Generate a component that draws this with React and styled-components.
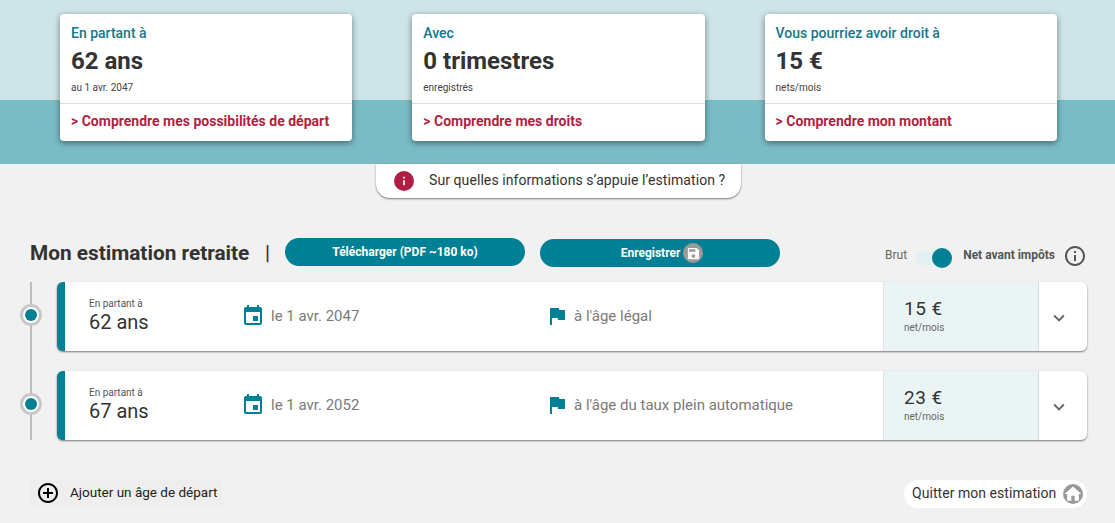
import React from 'react';
import styled, { createGlobalStyle } from 'styled-components';

const GlobalStyle = createGlobalStyle`
  * {
    box-sizing: border-box;
  }
  body {
    margin: 0;
    background: #f1f1f1;
    font-family: Roboto, "Liberation Sans", sans-serif;
  }
`;

const Page = styled.div`
  width: 1115px;
  height: 523px;
  overflow: hidden;
`;

const Banner = styled.section`
  height: 164px;
  padding: 14px 0 0 60px;
  display: grid;
  grid-template-columns: repeat(3, 292.3px);
  gap: 60px;
  align-items: start;
  background: linear-gradient(#cde4e8 0 100px, #7abcc6 100px);
`;

const Card = styled.article`
  height: 127px;
  display: flex;
  flex-direction: column;
  background: #fff;
  border-radius: 4px;
  box-shadow: 0 2px 6px rgba(0, 0, 0, 0.45);
`;

const CardBody = styled.div`
  height: 90px;
  padding: 11px 11px 0;
  border-bottom: 1px solid #ddd;
`;

const CardLabel = styled.div`
  font-size: 14px;
  line-height: 16px;
  font-weight: 500;
  color: #13788c;
`;

const CardValue = styled.div`
  margin-top: 5px;
  font-size: 24px;
  line-height: 30px;
  font-weight: 700;
  color: #333;
`;

const CardNote = styled.div`
  margin-top: 6px;
  font-size: 10px;
  line-height: 11px;
  color: #444;
`;

const CardLink = styled.a`
  padding: 9px 11px 0;
  font-size: 14px;
  line-height: 16px;
  font-weight: 700;
  color: #b01f43;
`;

const InfoPill = styled.div`
  width: 365px;
  height: 34px;
  margin: 0 0 0 376px;
  display: flex;
  align-items: center;
  gap: 15px;
  padding: 0 0 0 18px;
  background: #fff;
  border-radius: 0 0 14px 14px;
  box-shadow: 0 1px 2px rgba(0, 0, 0, 0.5);
  font-size: 14px;
  letter-spacing: 0.08px;
  color: #333;
`;

// the text sits a pixel above the centre of its icon
const RaisedText = styled.span`
  margin-top: -2px;
`;

const Heading = styled.div`
  height: 84px;
  padding: 40px 28px 0 30px;
  display: flex;
  align-items: flex-start;
`;

const Title = styled.h1`
  margin: 0;
  width: 235px;
  font-size: 20.8px;
  line-height: 30px;
  font-weight: 700;
  color: #333;
`;

const Separator = styled.span`
  width: 20px;
  font-size: 20px;
  line-height: 30px;
  font-weight: 500;
  color: #333;
`;

const PillButton = styled.button`
  width: 240px;
  height: 28px;
  margin: ${(p) => (p.$lower ? '1px 0 0 15px' : '0')};
  display: flex;
  align-items: center;
  justify-content: center;
  gap: 3px;
  padding: ${(p) => (p.$lower ? '0 0 0 4px' : '0')};
  border: 0;
  border-radius: 14px;
  background: #008094;
  color: #fff;
  font-family: inherit;
  font-size: 12px;
  font-weight: 700;
`;

const RoundIcon = styled.span`
  width: ${(p) => p.$size}px;
  height: ${(p) => p.$size}px;
  flex: none;
  display: flex;
  align-items: center;
  justify-content: center;
  border-radius: 50%;
  background: ${(p) => p.$bg};
`;

const Toggle = styled.div`
  margin-left: auto;
  margin-top: 6px;
  display: flex;
  align-items: center;
  font-size: 12px;
  color: #666;
`;

const ToggleLabel = styled.span`
  margin: -2px ${(p) => (p.$active ? '8px' : '0')} 0 0;
  font-weight: ${(p) => (p.$active ? 700 : 400)};
  color: ${(p) => (p.$active ? '#555' : '#666')};
`;

const Switch = styled.span`
  position: relative;
  width: 28px;
  height: 14px;
  margin: 4px 19px 0 9px;
  border-radius: 7px;
  background: #e3f0f2;
`;

const Knob = styled.span`
  position: absolute;
  top: -3px;
  right: -8px;
  width: 20px;
  height: 20px;
  border-radius: 50%;
  background: #008094;
`;

const Rows = styled.div`
  display: flex;
  flex-direction: column;
`;

const Row = styled.div`
  display: flex;
  height: ${(p) => (p.$last ? '69px' : '89px')};
  padding-left: 21px;
`;

const Track = styled.div`
  position: relative;
  width: 36px;
  flex: none;
`;

const TrackLine = styled.span`
  position: absolute;
  top: 0;
  bottom: 0;
  left: 9px;
  width: 2px;
  background: #bdbdbd;
`;

const Dot = styled.span`
  position: absolute;
  top: 22px;
  left: -1px;
  width: 22px;
  height: 22px;
  border: 3px solid #c8c8c8;
  border-radius: 50%;
  background: #fff;
  display: flex;
  align-items: center;
  justify-content: center;

  &::after {
    content: '';
    width: 12px;
    height: 12px;
    border-radius: 50%;
    background: #008094;
  }
`;

const EstimateCard = styled.article`
  width: 1030px;
  height: 69px;
  display: grid;
  grid-template-columns: 179px 305px 334px 156px 48px;
  background: #fff;
  border-left: 8px solid #008094;
  border-radius: 6px;
  box-shadow: 0 1px 2px rgba(0, 0, 0, 0.5);
  overflow: hidden;
`;

const AgeCell = styled.div`
  padding: 16px 0 0 24px;
`;

const AgeLabel = styled.div`
  font-size: 10px;
  line-height: 11px;
  color: #555;
`;

const AgeValue = styled.div`
  margin-top: 2px;
  font-size: 20px;
  line-height: 23px;
  color: #333;
`;

const MetaCell = styled.div`
  display: flex;
  align-items: center;
  gap: ${(p) => p.$gap}px;
  margin-left: ${(p) => p.$shift}px;
  padding-bottom: 1px;
  font-size: 15px;
  color: #7a7a7a;
`;

const AmountCell = styled.div`
  padding: 16px 0 0 20px;
  background: #eaf4f5;
  border-left: 1px solid #dde3e4;
  border-right: 1px solid #d5dcdd;
`;

const Amount = styled.div`
  font-size: 19px;
  line-height: 21px;
  letter-spacing: 0.5px;
  color: #333;
`;

const AmountNote = styled.div`
  margin-top: 3px;
  font-size: 10px;
  line-height: 11px;
  color: #666;
`;

const ChevronCell = styled.div`
  display: flex;
  align-items: center;
  justify-content: center;
  padding: 3px 8px 0 0;
`;

const Footer = styled.footer`
  margin-top: 40px;
  padding: 0 28px 0 30px;
  display: flex;
  justify-content: space-between;
  align-items: flex-start;
`;

const AddButton = styled.button`
  width: 192px;
  height: 26px;
  display: flex;
  align-items: center;
  gap: 10px;
  padding: 0 0 0 6px;
  border: 0;
  background: #eee;
  font-family: inherit;
  font-size: 13.5px;
  color: #222;
`;

const QuitButton = styled.button`
  width: 183px;
  height: 28px;
  display: flex;
  align-items: center;
  gap: 7px;
  padding: 0 0 0 8px;
  border: 0;
  border-radius: 14px;
  background: #fff;
  font-family: inherit;
  font-size: 14px;
  letter-spacing: 0.05px;
  color: #333;
`;

const MdIcon = ({ d, size = 24, color = '#008094' }) => (
  <svg width={size} height={size} viewBox="0 0 24 24" fill={color}>
    <path d={d} />
  </svg>
);

const CALENDAR =
  'M17 12h-5v5h5v-5zM16 1v2H8V1H6v2H5c-1.11 0-1.99.9-1.99 2L3 19c0 1.1.89 2 2 2h14c1.1 0 2-.9 2-2V5c0-1.1-.9-2-2-2h-1V1h-2zm3 18H5V8h14v11z';
const FLAG = 'M14.4 6L14 4H5v17h2v-7h5.6l.4 2h7V6z';
const SAVE =
  'M17 3H5c-1.11 0-2 .9-2 2v14c0 1.1.89 2 2 2h14c1.1 0 2-.9 2-2V7l-4-4zm-5 16c-1.66 0-3-1.34-3-3s1.34-3 3-3 3 1.34 3 3-1.34 3-3 3zm3-10H5V5h10v4z';
const HOME = 'M10 20v-6h4v6h5v-8h3L12 3 2 12h3v8z';
const INFO_SOLID = 'M11 17h2v-6h-2v6zm0-8h2V7h-2v2z';
const INFO_OUTLINE =
  'M11 7h2v2h-2zm0 4h2v6h-2zm1-9C6.48 2 2 6.48 2 12s4.48 10 10 10 10-4.48 10-10S17.52 2 12 2zm0 18c-4.41 0-8-3.59-8-8s3.59-8 8-8 8 3.59 8 8-3.59 8-8 8z';
const CHEVRON = 'M7.41 8.59L12 13.17l4.59-4.58L18 10l-6 6-6-6z';
const ADD_CIRCLE =
  'M13 7h-2v4H7v2h4v4h2v-4h4v-2h-4V7zm-1-5C6.48 2 2 6.48 2 12s4.48 10 10 10 10-4.48 10-10S17.52 2 12 2zm0 18c-4.41 0-8-3.59-8-8s3.59-8 8-8 8 3.59 8 8-3.59 8-8 8z';

const cards = [
  { label: 'En partant à', value: '62 ans', note: 'au 1 avr. 2047', link: '> Comprendre mes possibilités de départ' },
  { label: 'Avec', value: '0 trimestres', note: 'enregistrés', link: '> Comprendre mes droits' },
  { label: 'Vous pourriez avoir droit à', value: '15 €', note: 'nets/mois', link: '> Comprendre mon montant' },
];

const estimates = [
  { age: '62 ans', date: 'le 1 avr. 2047', reason: "à l'âge légal", amount: '15 €' },
  { age: '67 ans', date: 'le 1 avr. 2052', reason: "à l'âge du taux plein automatique", amount: '23 €' },
];

export default function App() {
  return (
    <Page>
      <GlobalStyle />
      <Banner>
        {cards.map((c) => (
          <Card key={c.label}>
            <CardBody>
              <CardLabel>{c.label}</CardLabel>
              <CardValue>{c.value}</CardValue>
              <CardNote>{c.note}</CardNote>
            </CardBody>
            <CardLink>{c.link}</CardLink>
          </Card>
        ))}
      </Banner>

      <InfoPill>
        <RoundIcon $size={20} $bg="#b01f43">
          <MdIcon d={INFO_SOLID} size={20} color="#fff" />
        </RoundIcon>
        <RaisedText>Sur quelles informations s’appuie l’estimation ?</RaisedText>
      </InfoPill>

      <Heading>
        <Title>Mon estimation retraite</Title>
        <Separator>|</Separator>
        <PillButton>Télécharger (PDF ~180 ko)</PillButton>
        <PillButton $lower>
          Enregistrer
          <RoundIcon $size={20} $bg="#9a9a9a">
            <MdIcon d={SAVE} size={15} color="#fff" />
          </RoundIcon>
        </PillButton>
        <Toggle>
          <ToggleLabel>Brut</ToggleLabel>
          <Switch>
            <Knob />
          </Switch>
          <ToggleLabel $active>Net avant impôts</ToggleLabel>
          <MdIcon d={INFO_OUTLINE} size={24} color="#555" />
        </Toggle>
      </Heading>

      <Rows>
        {estimates.map((e, i) => (
          <Row key={e.age} $last={i === estimates.length - 1}>
            <Track>
              <TrackLine />
              <Dot />
            </Track>
            <EstimateCard>
              <AgeCell>
                <AgeLabel>En partant à</AgeLabel>
                <AgeValue>{e.age}</AgeValue>
              </AgeCell>
              <MetaCell $gap={6} $shift={-3}>
                <MdIcon d={CALENDAR} />
                {e.date}
              </MetaCell>
              <MetaCell $gap={5} $shift={-4}>
                <MdIcon d={FLAG} />
                {e.reason}
              </MetaCell>
              <AmountCell>
                <Amount>{e.amount}</Amount>
                <AmountNote>net/mois</AmountNote>
              </AmountCell>
              <ChevronCell>
                <MdIcon d={CHEVRON} size={22} color="#666" />
              </ChevronCell>
            </EstimateCard>
          </Row>
        ))}
      </Rows>

      <Footer>
        <AddButton>
          <MdIcon d={ADD_CIRCLE} color="#000" />
          <RaisedText>Ajouter un âge de départ</RaisedText>
        </AddButton>
        <QuitButton>
          <RaisedText>Quitter mon estimation</RaisedText>
          <RoundIcon $size={20} $bg="#9a9a9a">
            <MdIcon d={HOME} size={22} color="#fff" />
          </RoundIcon>
        </QuitButton>
      </Footer>
    </Page>
  );
}
